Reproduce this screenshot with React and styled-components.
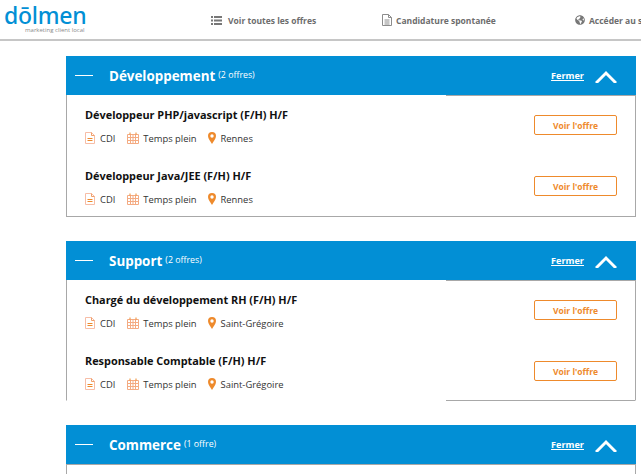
import React from "react";
import styled, { createGlobalStyle } from "styled-components";
import { FaGlobeAmericas } from "react-icons/fa";

const orange = "#ee8a2c";
const blue = "#028fd5";
const rule = "#a8a8a8";

const GlobalStyle = createGlobalStyle`
  html, body {
    margin: 0;
    padding: 0;
    background: #fff;
    overflow: hidden;
    font-family: "Open Sans", "Liberation Sans", sans-serif;
  }
`;

const Page = styled.div`
  width: 641px;
  height: 474px;
  overflow: hidden;
`;

const Header = styled.header`
  display: flex;
  align-items: center;
  padding-top: 1px;
  height: 38px;
  border-bottom: 2px solid #c6c6c6;
  white-space: nowrap;
  overflow: hidden;
`;

const Logo = styled.div`
  width: 211px;
  flex: none;
  padding-left: 4px;
  box-sizing: border-box;
  align-self: flex-start;
`;

const LogoWord = styled.div`
  font-family: "Noto Sans", "Open Sans", sans-serif;
  font-size: 23px;
  font-weight: 500;
  line-height: 22px;
  height: 22px;
  margin-top: 3px;
  letter-spacing: -0.25px;
  color: ${blue};
`;

const LogoTag = styled.div`
  font-size: 6px;
  line-height: 9px;
  color: #8a8a8a;
  margin-left: 21px;
`;

const NavItem = styled.a`
  display: flex;
  align-items: center;
  gap: ${(p) => p.$gap}px;
  flex: none;
  width: ${(p) => p.$width}px;
  font-size: 8.5px;
  font-weight: 700;
  color: #6d6d6d;
  svg {
    flex: none;
    color: #777;
  }
`;

const List = styled.main`
  padding: 15px 5px 0 66px;
  display: flex;
  flex-direction: column;
  gap: 24px;
`;

const SectionHead = styled.div`
  height: 39px;
  background: ${blue};
  display: flex;
  align-items: center;
  color: #fff;
  padding: 0 19px 0 9px;
`;

const Dash = styled.span`
  width: 18px;
  height: 1px;
  background: #fff;
  margin-right: 16px;
`;

const Title = styled.h2`
  margin: 0;
  padding-top: 1px;
  font-size: 13.4px;
  font-weight: 700;
  line-height: 38px;
`;

const Count = styled.span`
  font-size: 8.8px;
  margin-left: 3px;
  position: relative;
  top: -1px;
  flex: 1;
`;

const Close = styled.a`
  font-size: 9.1px;
  font-weight: 700;
  color: #fff;
  text-decoration: underline;
  margin-right: 11px;
`;

const SectionBody = styled.div`
  box-sizing: border-box;
  height: ${(p) => p.$height}px;
  border: 1px solid ${rule};
  border-bottom-color: ${(p) => (p.$clip ? "transparent" : rule)};
  position: relative;
`;

const TopCover = styled.div`
  position: absolute;
  left: 0;
  top: -1px;
  width: 379px;
  height: 1px;
  background: #fff;
`;

const BottomRule = styled.div`
  position: absolute;
  left: 379px;
  right: 0;
  bottom: -1px;
  height: 1px;
  background: ${rule};
`;

const Offer = styled.article`
  height: 61px;
  padding: 10px 18px 0 18px;
  box-sizing: border-box;
  display: grid;
  grid-template-columns: 1fr 83px;
  align-items: start;
`;

const OfferTitle = styled.h3`
  margin: 0;
  font-size: 10.9px;
  line-height: 17px;
  font-weight: 700;
  color: #111;
`;

const Meta = styled.div`
  display: flex;
  align-items: center;
  margin-top: 8px;
  height: 14px;
  font-size: 9.4px;
  color: #333;
`;

const MetaItem = styled.span`
  display: flex;
  align-items: center;
  gap: ${(p) => p.$gap}px;
  margin-right: ${(p) => p.$after}px;
`;

const Apply = styled.a`
  box-sizing: border-box;
  margin-top: 9px;
  height: 20px;
  border: 1px solid ${orange};
  border-radius: 2px;
  display: flex;
  align-items: center;
  justify-content: center;
  font-size: 8.5px;
  font-weight: 700;
  color: ${orange};
`;

const ListIcon = () => (
  <svg width="11" height="9" viewBox="0 0 11 9" fill="currentColor">
    <rect x="0" y="0" width="2" height="2" />
    <rect x="0" y="3.500" width="2" height="2" />
    <rect x="0" y="7" width="2" height="2" />
    <rect x="3" y="0" width="8" height="2" />
    <rect x="3" y="3.500" width="8" height="2" />
    <rect x="3" y="7" width="8" height="2" />
  </svg>
);

const FileIcon = () => (
  <svg width="10" height="12" viewBox="0 0 10 12" fill="none" stroke="#8c8c8c">
    <path d="M.5.5h6l3 3v8h-9z" />
    <path d="M6.500.5v3h3M2.500 6h5M2.500 8h5M2.500 10h5" />
  </svg>
);

const DocMeta = () => (
  <svg width="10" height="12" viewBox="0 0 10 12" fill="none">
    <path d="M.5.5h6l3 3v8h-9z" stroke="#f7bda6" />
    <path d="M6.500.5v3h3" stroke="#f0a06a" />
    <path d="M2.500 6.500h5M2.500 8.500h5" stroke={orange} />
  </svg>
);

const CalendarMeta = () => (
  <svg width="12" height="12" viewBox="0 0 12 12" fill="none" stroke="#f4ab82">
    <path d="M.5 2.500h11v9H.5z" />
    <path d="M.5 5.500h11M.5 8.500h11M3.500 2.500v9M6 2.500v9M8.500 2.500v9" />
    <path d="M3 .5v2M9 .5v2" stroke={orange} />
  </svg>
);

const PinMeta = () => (
  <svg width="8" height="12" viewBox="0 0 8 12">
    <path
      d="M4 0a4 4 0 0 1 4 4c0 2.500-2.500 5.500-4 8C2.500 9.500 0 6.500 0 4a4 4 0 0 1 4-4z"
      fill={orange}
    />
    <circle cx="4" cy="4" r="1.700" fill="#fff" />
  </svg>
);

const Chevron = () => (
  <svg width="22" height="14" viewBox="0 0 22 14" fill="none" stroke="#fff" strokeWidth="3">
    <path d="M1 14L11 4l10 10" />
  </svg>
);

const sections = [
  {
    title: "Développement",
    count: "(2 offres)",
    height: 122,
    cover: true,
    offers: [
      { title: "Développeur PHP/javascript (F/H) H/F", city: "Rennes" },
      { title: "Développeur Java/JEE (F/H) H/F", city: "Rennes" },
    ],
  },
  {
    title: "Support",
    count: "(2 offres)",
    height: 121,
    cover: true,
    clip: true,
    offers: [
      { title: "Chargé du développement RH (F/H) H/F", city: "Saint-Grégoire" },
      { title: "Responsable Comptable (F/H) H/F", city: "Saint-Grégoire" },
    ],
  },
  { title: "Commerce", count: "(1 offre)", height: 120, offers: [] },
];

export default function App() {
  return (
    <Page>
      <GlobalStyle />
      <Header>
        <Logo>
          <LogoWord>dōlmen</LogoWord>
          <LogoTag>marketing client local</LogoTag>
        </Logo>
        <NavItem $width={171} $gap={6}>
          <ListIcon />
          Voir toutes les offres
        </NavItem>
        <NavItem $width={193} $gap={4}>
          <FileIcon />
          Candidature spontanée
        </NavItem>
        <NavItem $width={80} $gap={4}>
          <FaGlobeAmericas size={10} />
          Accéder au site
        </NavItem>
      </Header>
      <List>
        {sections.map((s) => (
          <section key={s.title}>
            <SectionHead>
              <Dash />
              <Title>{s.title}</Title>
              <Count>{s.count}</Count>
              <Close>Fermer</Close>
              <Chevron />
            </SectionHead>
            <SectionBody $clip={s.clip} $height={s.height}>
              {s.cover && <TopCover />}
              {s.clip && <BottomRule />}
              {s.offers.map((o) => (
                <Offer key={o.title}>
                  <div>
                    <OfferTitle>{o.title}</OfferTitle>
                    <Meta>
                      <MetaItem $gap={5} $after={12}>
                        <DocMeta />
                        CDI
                      </MetaItem>
                      <MetaItem $gap={4} $after={11}>
                        <CalendarMeta />
                        Temps plein
                      </MetaItem>
                      <MetaItem $gap={5} $after={0}>
                        <PinMeta />
                        {o.city}
                      </MetaItem>
                    </Meta>
                  </div>
                  <Apply>Voir l'offre</Apply>
                </Offer>
              ))}
            </SectionBody>
          </section>
        ))}
      </List>
    </Page>
  );
}
